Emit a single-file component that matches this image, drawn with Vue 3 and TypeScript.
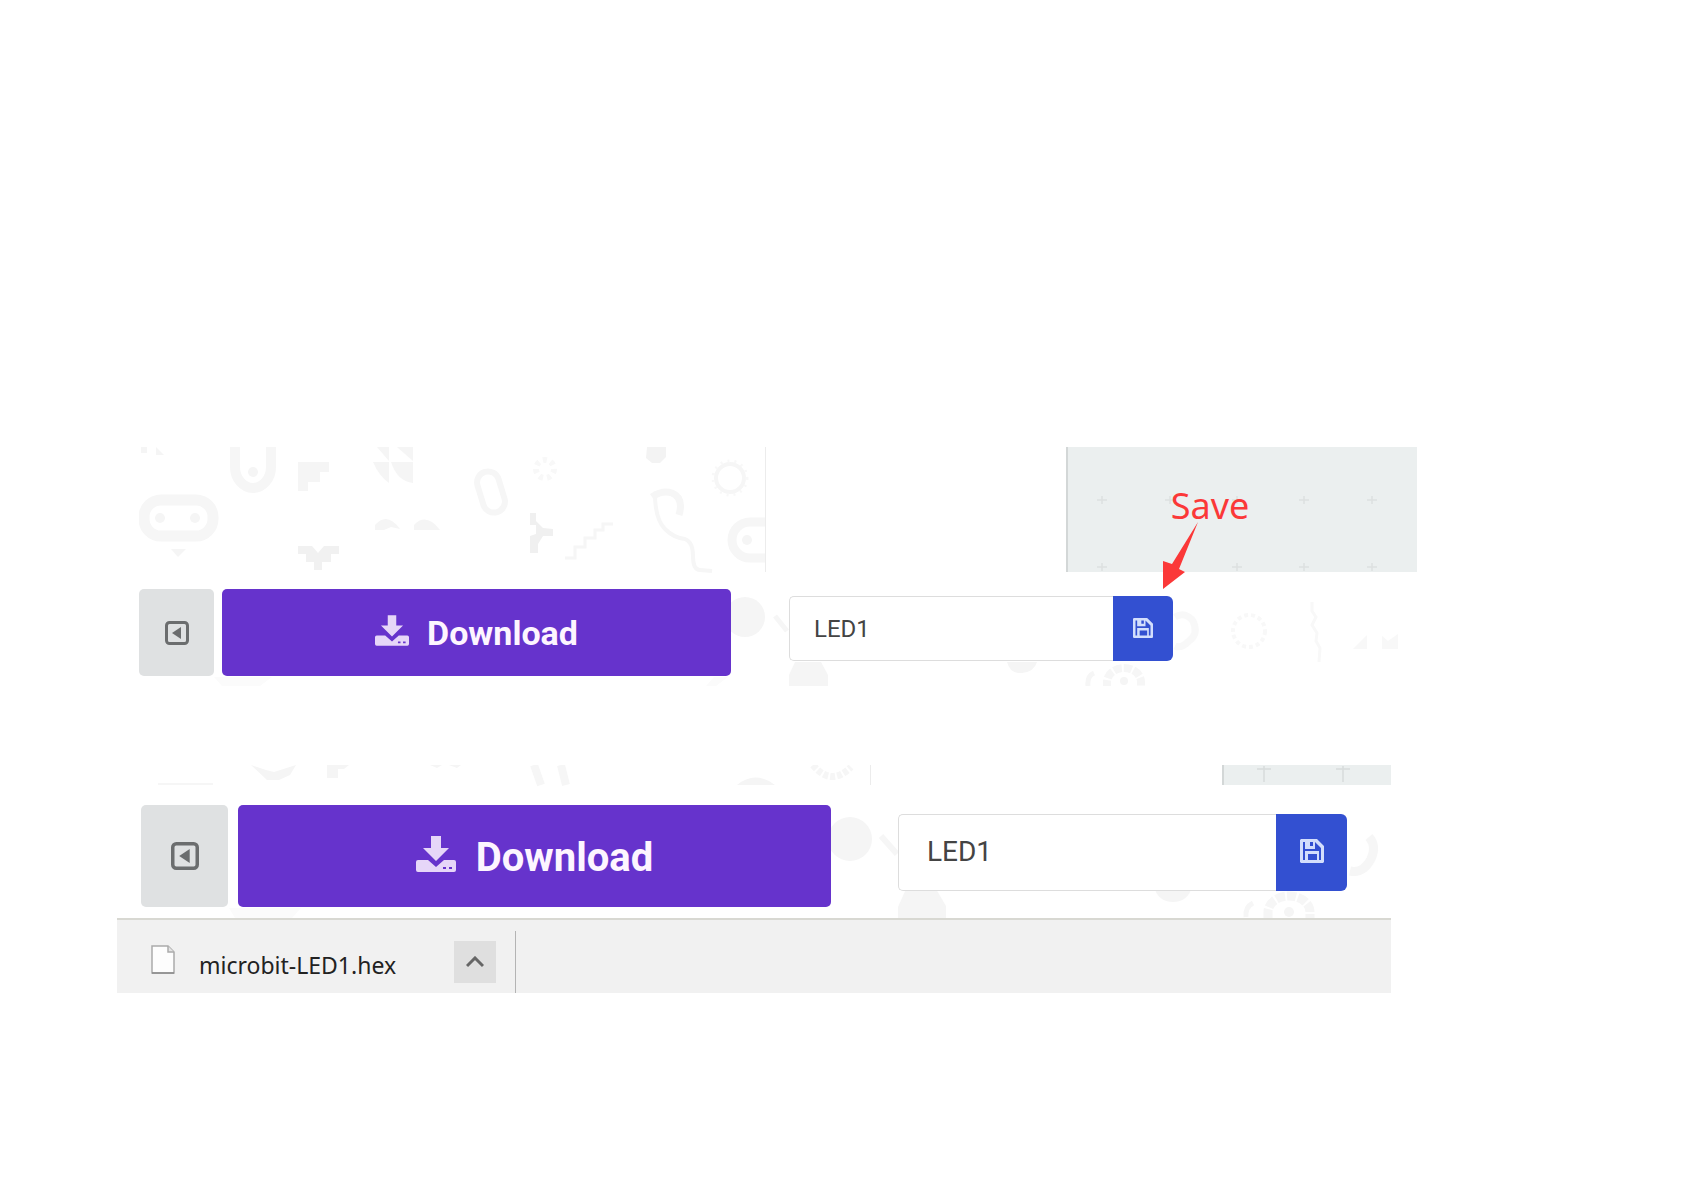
<script setup lang="ts">
import { ref } from 'vue'

const projectName = ref('LED1')
const savedName = ref('LED1')
const fileName = 'microbit-LED1.hex'
const upperMarks = ['1101 500', '1169 500', '1236 500', '1303 500', '1371 500', '1101 567', '1236 567', '1303 567', '1371 567']
</script>

<template>
  <main class="page">
    <section class="panel editor">
      <svg class="backdrop" viewBox="139 447 1278 239" preserveAspectRatio="xMinYMin slice" aria-hidden="true">
        <g fill="none" stroke="#f6f6f6">
          <path d="M235 447v20a18 21 0 0 0 36 0v-20" stroke-width="10" />
          <rect x="144" y="500" width="69" height="36" rx="17" stroke-width="11" />
          <rect x="480" y="471" width="22" height="42" rx="11" stroke-width="6" transform="rotate(-17 491 492)" />
          <circle cx="545" cy="469" r="9" stroke-width="6" stroke-dasharray="4 4" stroke="#f8f8f8" />
          <circle cx="730" cy="478" r="14" stroke-width="4" />
          <circle cx="730" cy="478" r="17" stroke-width="3" stroke-dasharray="2 5" stroke="#f8f8f8" />
          <path d="M652 497q10-7 20-4q12 5 7 22" stroke-width="7" />
          <path d="M655 498q1 22 10 31t20 10q8 3 8 17t7 14l12 1" stroke-width="4" />
          <path d="M565 558h10v-11h10v-9h10v-8h8v-6h10" stroke-width="3" />
          <path d="M765 522h-15a18 18 0 0 0 0 36h15" stroke-width="9" />
          <path d="M1175 617q10-6 18 4q6 13-4 20q-8 8-14 5" stroke-width="7" stroke="#f8f8f8" />
          <circle cx="1249" cy="631" r="16" stroke-width="4" stroke-dasharray="4 3" stroke="#f8f8f8" />
          <path d="M1312 602v9l4 6-4 8 5 8-1 8 4 7-1 14" stroke-width="3" stroke="#f8f8f8" />
          <path d="M1107 688v-6a17 14 0 0 1 34 0v6" stroke-width="8" stroke-dasharray="8 2" />
          <path d="M1094 673q-7 3-6 13" stroke-width="5" />
          <path d="M775 616l12 15" stroke-width="5" />
        </g>
        <g fill="#f5f5f5">
          <circle cx="253" cy="472" r="5" />
          <circle cx="160" cy="518" r="5" /><circle cx="195" cy="518" r="5" />
          <path d="M171 549h15l-8 8zM141 447h6v6h-6zM156 447l8 8h-8z" />
          <path d="M298 462h31v10h-9v10h-12v9h-10z" />
          <path d="M377 447h12v14zM397 447h16v14zM373 462h16v21q-10-7-16-21zM391 462h22v21q-16-2-22-21z" />
          <path d="M375 530v-5q12-14 25 4l-9-2-7 3zM414 530v-5q12-13 26 5z" />
          <path d="M298 546h14l6 7 6-7h15v8h-8v8h-9v8h-8v-8h-8v-8h-8z" fill="#f1f1f1" />
          <path d="M530 513h6v8l7 7 10 1v7h-10l-5 8v9h-8v-17l6-2v-9h-6z" fill="#f0f0f0" />
          <path d="M647 447h19v10l-6 6h-8l-6-5z" fill="#f3f3f3" />
          <circle cx="747" cy="540" r="5" />
          <circle cx="745" cy="617" r="20" />
          <path d="M789 686v-11l6-13h26l7 13v11z" />
          <path d="M1007 662h30q-3 10-15 11t-15-11z" />
          <path d="M1353 649l14-14v14zM1382 636l6 5 10-7v15h-16z" fill="#f8f8f8" />
          <path d="M214 677h58l-12 9h-38zM706 686l8-9h14l-12 9z" fill="#fbfbfb" />
          <circle cx="1124" cy="681" r="4" />
        </g>
      </svg>

      <div class="scene">
        <div class="simulator"></div>
        <div class="toolbox"></div>
        <div class="workspace">
          <svg class="marks" viewBox="1067 447 350 125" preserveAspectRatio="xMinYMin slice" aria-hidden="true">
            <path v-for="mark in upperMarks" :key="mark" :d="`M${mark}m-5 0h10m-5-4v8`" stroke="#dde1e1" stroke-width="1.5" />
          </svg>
          <div class="callout">
            <span>Save</span>
            <svg viewBox="0 0 24 69" width="24" height="69" aria-hidden="true">
              <path d="M35 1 9 43 0 40v28l22-17-6-3z" fill="#fb3838" />
            </svg>
          </div>
        </div>
      </div>

      <div class="toolbar">
        <button class="collapse" type="button" aria-label="Collapse simulator">
          <svg viewBox="0 0 24 24" aria-hidden="true">
            <rect x="1.5" y="1.5" width="21" height="21" rx="3" fill="none" stroke="#6b6d6e" stroke-width="3" />
            <path d="M16 6v12l-9-6z" fill="#6b6d6e" />
          </svg>
        </button>
        <button class="download" type="button">
          <svg viewBox="0 0 40 36" aria-hidden="true">
            <path d="M15 0h10v12h8L20 25 7 12h8z" fill="#e6d6f8" />
            <path fill-rule="evenodd" d="M2 24h10l8 7 8-7h10q2 0 2 2v8q0 2-2 2H2q-2 0-2-2v-8q0-2 2-2zm25 7v2h3v-2zm6 0v2h3v-2z" fill="#e6d6f8" />
          </svg>
          <span>Download</span>
        </button>
        <form class="project" @submit.prevent>
          <input v-model="projectName" type="text" aria-label="Project name" />
          <button type="submit" aria-label="Save project">
            <svg viewBox="0 0 24 24" aria-hidden="true">
              <path fill-rule="evenodd" d="M1 0h16l7 7v16l-1 1H1l-1-1V1zm2 3v18h2v-9h14v9h2V9l-6-6v7H5V3zm7 0v4h3V3zM8 15v6h9v-6z" fill="#d3defc" />
            </svg>
          </button>
        </form>
      </div>
    </section>

    <section class="panel editor large">
      <svg class="backdrop" viewBox="117 765 1274 228" preserveAspectRatio="xMinYMin slice" aria-hidden="true">
        <g fill="none" stroke="#f6f6f6">
          <path d="M158 784h55" stroke-width="2" />
          <path d="M534 765l7 20M561 765l5 20" stroke-width="8" />
          <path d="M813 765q18 22 38 2" stroke-width="7" stroke-dasharray="5 2" />
          <path d="M881 836l16 18" stroke-width="6" />
          <path d="M1369 837q8 9 2 22q-8 15-21 12" stroke-width="9" />
          <path d="M1268 918v-6a21 16 0 0 1 42 0v6" stroke-width="9" stroke-dasharray="9 2" />
          <path d="M1253 903q-8 4-7 14" stroke-width="5" />
        </g>
        <g fill="#f5f5f5">
          <path d="M251 765l15 5 8 2 22-7-6 10-11 5h-12zM327 765h22l-5 4h-6v9h-11zM430 765h12l-5 3zM449 765h12l-4 3z" />
          <path d="M737 785q18-15 38 0z" />
          <circle cx="850" cy="839" r="22" />
          <path d="M898 918v-11l8-18h30l10 17v12z" />
          <path d="M1155 890h36q-5 12-18 12t-18-12z" />
          <circle cx="1289" cy="912" r="5" />
          <path d="M229 908h72l-9 10h-57z" fill="#fbfbfb" />
        </g>
      </svg>

      <div class="scene">
        <div class="simulator"></div>
        <div class="toolbox"></div>
        <div class="workspace">
          <svg class="marks" viewBox="1222 765 169 20" preserveAspectRatio="xMinYMin slice" aria-hidden="true">
            <path d="M1255 769h14m-7-3v16M1334 769h14m-7-3v16" stroke="#d8dcdc" stroke-width="1.5" />
          </svg>
        </div>
      </div>

      <div class="toolbar">
        <button class="collapse" type="button" aria-label="Collapse simulator">
          <svg viewBox="0 0 24 24" aria-hidden="true">
            <rect x="1.5" y="1.5" width="21" height="21" rx="3" fill="none" stroke="#6b6d6e" stroke-width="3" />
            <path d="M16 6v12l-9-6z" fill="#6b6d6e" />
          </svg>
        </button>
        <button class="download" type="button">
          <svg viewBox="0 0 40 36" aria-hidden="true">
            <path d="M15 0h10v12h8L20 25 7 12h8z" fill="#e6d6f8" />
            <path fill-rule="evenodd" d="M2 24h10l8 7 8-7h10q2 0 2 2v8q0 2-2 2H2q-2 0-2-2v-8q0-2 2-2zm25 7v2h3v-2zm6 0v2h3v-2z" fill="#e6d6f8" />
          </svg>
          <span>Download</span>
        </button>
        <form class="project" @submit.prevent>
          <input v-model="savedName" type="text" aria-label="Saved project name" />
          <button type="submit" aria-label="Save project">
            <svg viewBox="0 0 24 24" aria-hidden="true">
              <path fill-rule="evenodd" d="M1 0h16l7 7v16l-1 1H1l-1-1V1zm2 3v18h2v-9h14v9h2V9l-6-6v7H5V3zm7 0v4h3V3zM8 15v6h9v-6z" fill="#d3defc" />
            </svg>
          </button>
        </form>
      </div>

      <footer class="shelf">
        <a class="file" href="#">
          <svg viewBox="0 0 24 30" width="24" height="30" aria-hidden="true">
            <path d="M1 1h16l6 6v21H1z" fill="#fdfdfd" stroke="#aaaaaa" stroke-width="1.5" />
            <path d="M17 1v6h6" fill="#e4e4e4" stroke="#aaaaaa" stroke-width="1.5" />
            <path d="M1 28h22" stroke="#8a8a8a" stroke-width="1.5" />
          </svg>
          <span>{{ fileName }}</span>
        </a>
        <button class="more" type="button" aria-label="File options">
          <svg viewBox="0 0 18 12" width="18" height="12" aria-hidden="true">
            <path d="M1 10l8-8 8 8" fill="none" stroke="#666666" stroke-width="3" />
          </svg>
        </button>
        <div class="divider"></div>
      </footer>
    </section>
  </main>
</template>

<style>
body {
  background: #ffffff;
}
</style>

<style scoped>
.page {
  box-sizing: border-box;
  min-height: 100vh;
  padding: 447px 0 198px;
  font-family: Roboto, 'Noto Sans', sans-serif;
}

.page button {
  padding: 0;
  border: 0;
  cursor: pointer;
}

.page svg {
  display: block;
}

.panel {
  position: relative;
  margin: 0 267px 79px 139px;
}

.panel.large {
  margin: 0 293px 0 117px;
}

.backdrop {
  position: absolute;
  inset: 0;
  width: 100%;
  height: 100%;
}

.scene {
  position: relative;
  display: flex;
  height: 125px;
}

.simulator {
  box-sizing: border-box;
  flex: 627 1 0;
  border-right: 1px solid #ececec;
}

.toolbox {
  flex: 301 1 0;
}

.workspace {
  position: relative;
  box-sizing: border-box;
  flex: 350 1 0;
  border-left: 2px solid #d3d7d7;
  background: #ebefef;
}

.marks {
  width: 100%;
  height: 100%;
}

.callout {
  position: absolute;
  top: 34px;
  left: 95px;
  color: #fb3838;
  font: 36px/50px 'Noto Sans', sans-serif;
}

.callout span {
  display: block;
  padding-left: 8px;
}

.callout svg {
  margin-top: -10px;
  overflow: visible;
}

.toolbar {
  position: relative;
  display: flex;
  align-items: center;
  padding: 17px 244px 10px 0;
}

.collapse {
  display: grid;
  flex: 0 0 75px;
  place-items: center;
  height: 87px;
  border-radius: 5px;
  background: #dfe1e2;
}

.collapse svg {
  width: 24px;
  height: 24px;
}

.download {
  display: flex;
  flex: 509 1 0;
  gap: 18px;
  align-items: center;
  justify-content: center;
  min-width: 0;
  height: 87px;
  margin-left: 8px;
  border-radius: 5px;
  background: #6633cc;
  color: #fdf5ff;
  font: 700 34px/40px Roboto, sans-serif;
}

.download svg {
  width: 34px;
  height: 31px;
  margin-bottom: 4px;
}

.project {
  display: flex;
  flex: 384 1 0;
  min-width: 0;
  height: 65px;
  margin: 0 0 8px 58px;
}

.project input {
  box-sizing: border-box;
  flex: 1;
  min-width: 0;
  padding: 0 24px;
  border: 1px solid #dddddd;
  border-right: 0;
  border-radius: 5px 0 0 5px;
  outline: 0;
  background: #ffffff;
  color: #444444;
  font: 24px/32px Roboto, sans-serif;
}

.project button {
  display: grid;
  flex: 0 0 60px;
  place-items: center;
  border-radius: 0 6px 6px 0;
  background: #3350d1;
}

.project svg {
  width: 20px;
  height: 20px;
  margin-bottom: 2px;
}

.large .scene {
  height: 20px;
}

.large .simulator {
  flex-grow: 755;
}

.large .toolbox {
  flex-grow: 352;
}

.large .workspace {
  flex-grow: 167;
}

.large .toolbar {
  padding: 20px 44px 11px 24px;
}

.large .collapse {
  flex-basis: 87px;
  height: 102px;
}

.large .collapse svg {
  width: 28px;
  height: 28px;
}

.large .download {
  flex-grow: 593;
  gap: 20px;
  height: 102px;
  margin-left: 10px;
  font-size: 40px;
}

.large .download span {
  padding-top: 4px;
}

.large .download svg {
  width: 40px;
  height: 36px;
}

.large .project {
  flex-grow: 449;
  height: 77px;
  margin-left: 67px;
}

.large .project input {
  padding: 0 28px;
  font-size: 28px;
}

.large .project button {
  flex-basis: 71px;
}

.large .project svg {
  width: 24px;
  height: 24px;
}

.shelf {
  position: relative;
  display: flex;
  align-items: center;
  box-sizing: border-box;
  height: 75px;
  padding-top: 11px;
  border-top: 2px solid #d8d8d2;
  background: #f1f1f1;
}

.file {
  display: flex;
  gap: 24px;
  padding-left: 34px;
  color: #222222;
  font: 23px/32px 'Noto Sans', sans-serif;
  text-decoration: none;
}

.file svg {
  margin-top: 2px;
}

.file span {
  padding-top: 6px;
}

.more {
  display: grid;
  place-items: center;
  width: 42px;
  height: 42px;
  margin-left: 58px;
  background: #dfdfdf;
}

.divider {
  align-self: flex-end;
  width: 1px;
  height: 62px;
  margin-left: 19px;
  background: #b4b4b4;
}
</style>
